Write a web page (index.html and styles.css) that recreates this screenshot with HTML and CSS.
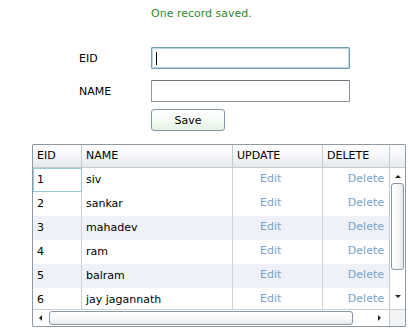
FILE: index.html
```html
<!DOCTYPE html>
<html>
<head>
<meta charset="utf-8">
<link rel="stylesheet" href="styles.css">
</head>
<body>
<div class="msg">One record saved.</div>
<div class="form">
  <div class="frow r1"><label class="lbl">EID</label><div class="tb focus"><span class="caret"></span></div></div>
  <div class="frow r2"><label class="lbl">NAME</label><div class="tb"></div></div>
  <div class="frow r3"><span class="lbl"></span><button class="btn">Save</button></div>
</div>
<div class="dg">
  <div class="dg-head">
    <div class="hc c-eid">EID</div>
    <div class="hc c-name">NAME</div>
    <div class="hc c-upd">UPDATE</div>
    <div class="hc c-del">DELETE</div>
    <div class="hc c-sb"></div>
  </div>
  <div class="dg-main">
    <div class="dg-rows">
      <div class="row"><div class="cell c-eid cur">1</div><div class="cell c-name">siv</div><div class="cell c-upd link">Edit</div><div class="cell c-del link">Delete</div></div>
      <div class="row"><div class="cell c-eid">2</div><div class="cell c-name">sankar</div><div class="cell c-upd link">Edit</div><div class="cell c-del link">Delete</div></div>
      <div class="row alt"><div class="cell c-eid">3</div><div class="cell c-name">mahadev</div><div class="cell c-upd link">Edit</div><div class="cell c-del link">Delete</div></div>
      <div class="row"><div class="cell c-eid">4</div><div class="cell c-name">ram</div><div class="cell c-upd link">Edit</div><div class="cell c-del link">Delete</div></div>
      <div class="row alt"><div class="cell c-eid">5</div><div class="cell c-name">balram</div><div class="cell c-upd link">Edit</div><div class="cell c-del link">Delete</div></div>
      <div class="row"><div class="cell c-eid">6</div><div class="cell c-name">jay jagannath</div><div class="cell c-upd link">Edit</div><div class="cell c-del link">Delete</div></div>
    </div>
    <div class="vscroll">
      <span class="arr up"></span>
      <div class="vthumb"></div>
      <span class="arr down"></span>
    </div>
  </div>
  <div class="dg-foot">
    <div class="hscroll">
      <span class="arr left"></span>
      <div class="hthumb"></div>
      <span class="arr right"></span>
    </div>
    <div class="corner"></div>
  </div>
</div>
</body>
</html>
```

FILE: styles.css
```css
html, body {
  margin: 0;
  padding: 0;
  background: #ffffff;
}
body {
  font-family: "DejaVu Sans", Verdana, sans-serif;
  font-size: 11px;
  color: #000;
}
.msg {
  padding: 7px 0 0 151px;
  height: 14px;
  line-height: 14px;
  color: #2f8a2f;
}
.form {
  margin: 26px 0 0 79px;
  display: flex;
  flex-direction: column;
}
.frow {
  display: flex;
  align-items: center;
}
.r2 { margin-top: 11px; }
.r3 { margin-top: 7px; }
.lbl {
  width: 72px;
  flex: none;
}
.tb {
  width: 199px;
  height: 22px;
  box-sizing: border-box;
  border: 1px solid #8d959d;
  border-top-color: #6f7880;
  border-radius: 1px;
  background: #fff;
  position: relative;
}
.tb.focus {
  border-color: #6e9cb2;
  box-shadow: inset 0 0 0 1px #b9d7e3;
}
.caret {
  position: absolute;
  left: 4px;
  top: 4px;
  width: 1px;
  height: 13px;
  background: #000;
}
.btn {
  width: 74px;
  height: 22px;
  box-sizing: border-box;
  border: 1px solid #8796a4;
  border-radius: 3px;
  background: linear-gradient(#ffffff 0%, #f7fbf7 45%, #e3f3e3 100%);
  font-family: inherit;
  font-size: 11px;
  color: #000;
  padding: 0;
}
.dg {
  margin: 13px 0 0 32px;
  width: 374px;
  box-sizing: border-box;
  border: 1px solid #8e99a4;
  border-radius: 1px;
}
.dg-head {
  display: flex;
  height: 23px;
  background: linear-gradient(#ffffff 0%, #f6f7f9 50%, #e6e9ed 100%);
  border-bottom: 1px solid #c5ccd3;
  box-sizing: border-box;
}
.hc {
  box-sizing: border-box;
  border-right: 1px solid #c3c9cf;
  padding-left: 4px;
  line-height: 22px;
}
.c-eid { width: 49px; }
.c-name { width: 151px; }
.c-upd { width: 90px; }
.c-del { width: 67px; }
.c-sb { width: 15px; border-right: none; }
.dg-main {
  display: flex;
  height: 141px;
}
.dg-rows {
  width: 356px;
  overflow: hidden;
}
.row {
  display: flex;
  height: 24px;
  background: #fff;
}
.row.alt { background: #eef2f8; }
.cell {
  box-sizing: border-box;
  border-right: 1px solid #ccd2d8;
  padding-left: 4px;
  line-height: 24px;
  white-space: nowrap;
}
.row .c-del { width: 66px; border-right: none; text-align: right; padding: 0 5px 0 0; line-height: 22px; }
.row .c-upd { padding-left: 27px; line-height: 22px; }
.link { color: #78a2cb; }
.cur {
  border: 1px solid #9ccad8;
  line-height: 22px;
  padding-left: 3px;
}
.vscroll {
  width: 16px;
  box-sizing: border-box;
  border-left: 1px solid #c3c9cf;
  background: #fff;
  display: flex;
  flex-direction: column;
  align-items: center;
}
.vthumb {
  width: 13px;
  height: 87px;
  box-sizing: border-box;
  margin-top: 5px;
  border: 1px solid #8a96a2;
  border-radius: 3px;
  background: linear-gradient(90deg, #ffffff 0%, #f4f6f8 60%, #e2e7ec 100%);
}
.arr {
  width: 0;
  height: 0;
  display: block;
}
.arr.up {
  margin-top: 7px;
  border-left: 3px solid transparent;
  border-right: 3px solid transparent;
  border-bottom: 3px solid #222;
}
.arr.down {
  margin-top: 25px;
  border-left: 3px solid transparent;
  border-right: 3px solid transparent;
  border-top: 3px solid #222;
}
.dg-foot {
  display: flex;
  height: 17px;
  border-top: 1px solid #c8ced4;
  box-sizing: border-box;
}
.hscroll {
  width: 356px;
  display: flex;
  align-items: center;
  background: #fff;
}
.arr.left {
  margin-left: 6px;
  border-top: 3px solid transparent;
  border-bottom: 3px solid transparent;
  border-right: 3px solid #222;
}
.arr.right {
  margin-left: 25px;
  border-top: 3px solid transparent;
  border-bottom: 3px solid transparent;
  border-left: 3px solid #222;
}
.hthumb {
  margin-left: 7px;
  width: 304px;
  height: 14px;
  box-sizing: border-box;
  border: 1px solid #8a96a2;
  border-radius: 3px;
  background: linear-gradient(#ffffff 0%, #f4f6f8 60%, #e2e7ec 100%);
}
.corner {
  width: 16px;
  box-sizing: border-box;
  border-left: 1px solid #c3c9cf;
  background: #f1f3f5;
}
```
